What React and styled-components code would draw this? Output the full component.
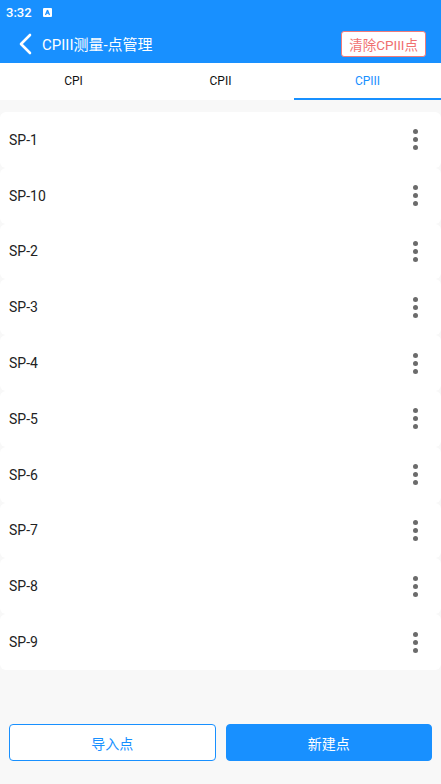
import React, { useState } from 'react';
import styled, { createGlobalStyle } from 'styled-components';

const BLUE = '#1890ff';

const Global = createGlobalStyle`
  html, body { margin: 0; padding: 0; }
  body {
    font-family: Roboto, "Noto Sans CJK SC", sans-serif;
    background: #f8f8f8;
  }
`

const Page = styled.div`
  width: 441px;
  height: 784px;
  display: flex;
  flex-direction: column;
  background: #f8f8f8;
  overflow: hidden;
`

const StatusBar = styled.div`
  height: 24px;
  background: ${BLUE};
  display: flex;
  align-items: center;
  gap: 11px;
  padding: 0 6px;
  color: #fff;
  font-size: 13px;
  font-weight: 500;
`

const StatusIcon = styled.span`
  width: 9px;
  height: 9px;
  background: #fff;
  border-radius: 1px;
  display: flex;
  align-items: center;
  justify-content: center;
`

const Header = styled.div`
  height: 39px;
  background: ${BLUE};
  display: flex;
  align-items: center;
  padding: 0 15px 0 18px;
  color: #fff;
`

const Back = styled.button`
  border: 0;
  background: none;
  padding: 0;
  display: flex;
  margin-right: 10px;
`

const Title = styled.div`
  flex: 1;
  font-size: 15px;
`

const ClearButton = styled.button`
  height: 26px;
  padding: 0 7px;
  border: 1px solid #f07b7b;
  border-radius: 3px;
  background: #fff;
  color: #f07070;
  font-family: inherit;
  font-size: 13.5px;
`

const Tabs = styled.div`
  height: 37px;
  display: grid;
  grid-template-columns: repeat(3, 1fr);
  background: #fff;
`

const Tab = styled.div`
  display: flex;
  align-items: center;
  justify-content: center;
  font-size: 12px;
  color: ${p => (p.$active ? BLUE : '#111')};
  border-bottom: 2px solid ${p => (p.$active ? BLUE : 'transparent')};
  box-sizing: border-box;
`

const List = styled.div`
  margin-top: 12px;
  display: flex;
  flex-direction: column;
`

const Row = styled.div`
  height: 55.8px;
  background: #fff;
  border-radius: 6px;
  display: flex;
  align-items: center;
  justify-content: space-between;
  padding: 0 23px 0 9px;
  font-size: 14px;
  color: #222;
`

const Dots = styled.div`
  display: flex;
  flex-direction: column;
  gap: 3px;
  span {
    width: 5px;
    height: 5px;
    border-radius: 50%;
    background: #6b6b6b;
  }
`

const Footer = styled.div`
  margin-top: auto;
  display: grid;
  grid-template-columns: 1fr 1fr;
  gap: 10px;
  padding: 0 9px 23px 9px;
`

const ActionButton = styled.button`
  height: 37px;
  border-radius: 4px;
  border: 1px solid ${BLUE};
  background: ${p => (p.$primary ? BLUE : '#fff')};
  color: ${p => (p.$primary ? '#fff' : BLUE)};
  font-family: inherit;
  font-size: 14px;
`

const points = ['SP-1', 'SP-10', 'SP-2', 'SP-3', 'SP-4', 'SP-5', 'SP-6', 'SP-7', 'SP-8', 'SP-9'];

export default function App() {
  const [tab, setTab] = useState(2);
  return (
    <Page>
      <Global />
      <StatusBar>
        <span>3:32</span>
        <StatusIcon>
          <svg width="7" height="7" viewBox="0 0 7 7">
            <path d="M3.5 1 L1.5 6 M3.5 1 L5.5 6 M2.3 4.2 H4.7" stroke={BLUE} strokeWidth="1.2" fill="none" />
          </svg>
        </StatusIcon>
      </StatusBar>
      <Header>
        <Back>
          <svg width="14" height="22" viewBox="0 0 14 22">
            <path d="M12 2 L3 11 L12 20" stroke="#fff" strokeWidth="2.6" fill="none" strokeLinecap="round" strokeLinejoin="round" />
          </svg>
        </Back>
        <Title>CPIII测量-点管理</Title>
        <ClearButton>清除CPIII点</ClearButton>
      </Header>
      <Tabs>
        {['CPI', 'CPII', 'CPIII'].map((t, i) => (
          <Tab key={t} $active={i === tab} onClick={() => setTab(i)}>{t}</Tab>
        ))}
      </Tabs>
      <List>
        {points.map(p => (
          <Row key={p}>
            {p}
            <Dots><span /><span /><span /></Dots>
          </Row>
        ))}
      </List>
      <Footer>
        <ActionButton>导入点</ActionButton>
        <ActionButton $primary>新建点</ActionButton>
      </Footer>
    </Page>
  );
}
